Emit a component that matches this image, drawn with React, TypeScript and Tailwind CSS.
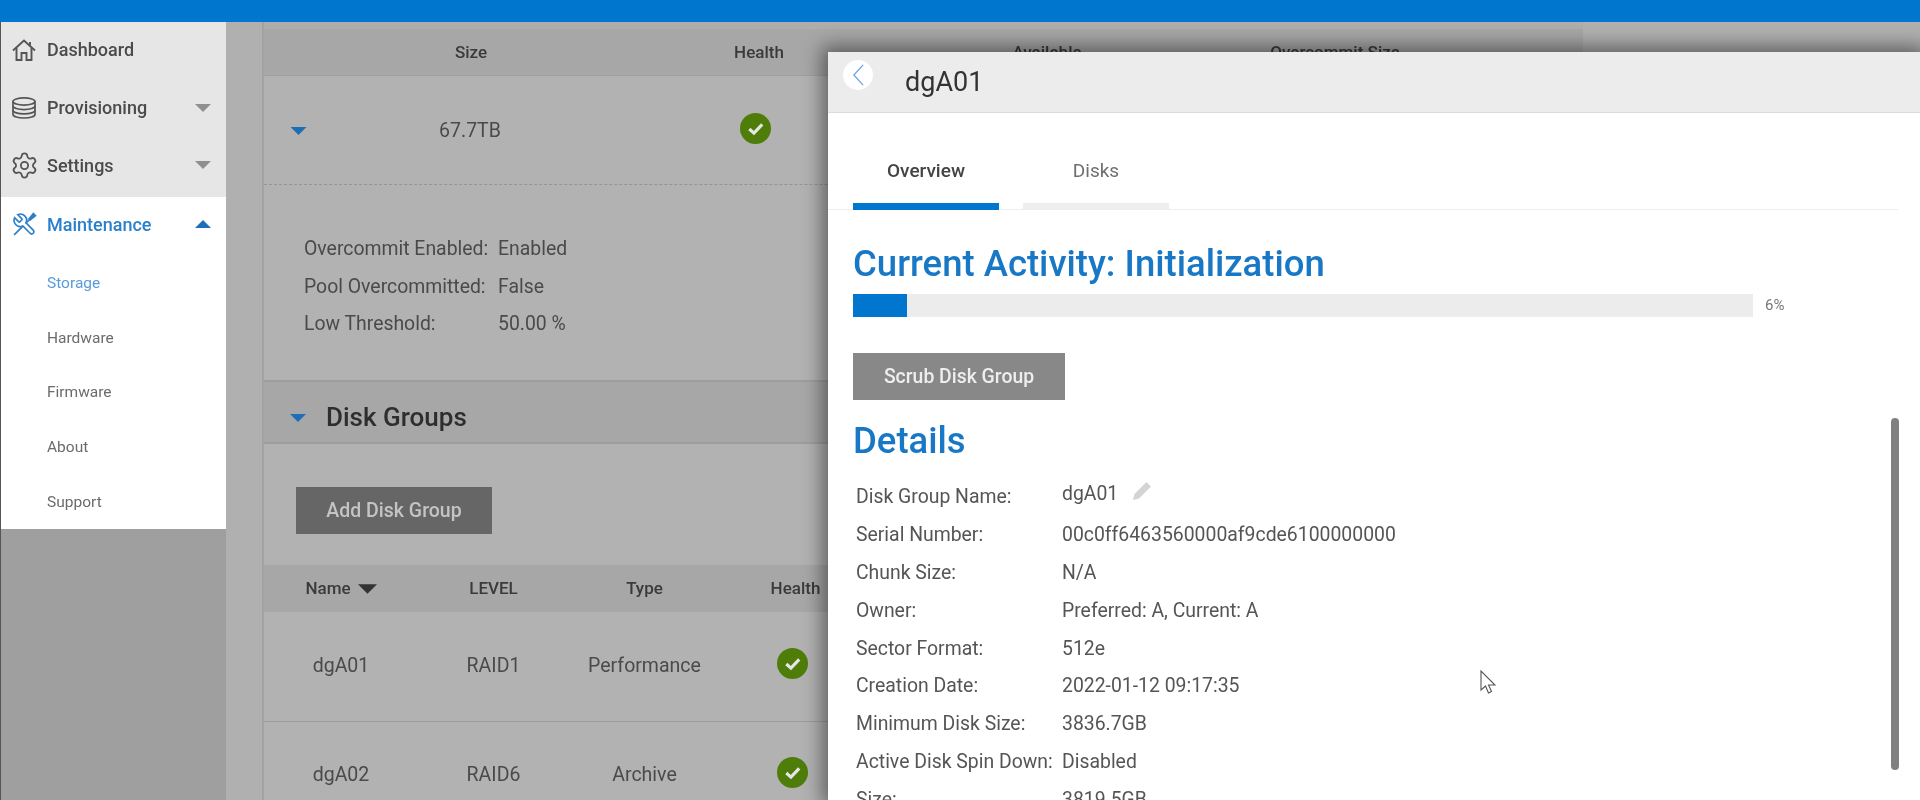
import { Settings } from "lucide-react";

const poolDetails = [
  ["Overcommit Enabled:", "Enabled"],
  ["Pool Overcommitted:", "False"],
  ["Low Threshold:", "50.00 %"],
];

const diskGroups = [
  { name: "dgA01", level: "RAID1", type: "Performance", height: "h-[110px]" },
  { name: "dgA02", level: "RAID6", type: "Archive", height: "h-[108px]" },
];

const details = [
  ["Serial Number:", "00c0ff6463560000af9cde6100000000"],
  ["Chunk Size:", "N/A"],
  ["Owner:", "Preferred: A, Current: A"],
  ["Sector Format:", "512e"],
  ["Creation Date:", "2022-01-12 09:17:35"],
  ["Minimum Disk Size:", "3836.7GB"],
  ["Active Disk Spin Down:", "Disabled"],
  ["Size:", "3819.5GB"],
];

function Caret({ up, className }: { up?: boolean; className: string }) {
  return (
    <svg viewBox="0 0 16 8" className={className} fill="currentColor">
      <path d={up ? "M8 0 16 8H0Z" : "M0 0H16L8 8Z"} />
    </svg>
  );
}

function HealthOk({ className = "" }: { className?: string }) {
  return (
    <svg viewBox="0 0 30 30" className={`h-[31px] w-[31px] ${className}`}>
      <circle cx="15" cy="15" r="15" fill="#4f7d0a" />
      <path d="M9 15.5 13.5 19.5 21.5 11" fill="none" stroke="#e6e6e6" strokeWidth="3" />
    </svg>
  );
}

function HomeIcon() {
  return (
    <svg viewBox="0 0 24 22" className="h-[22px] w-[24px]" fill="none" stroke="currentColor" strokeWidth="1.9">
      <path d="M1 11.5 12 1.5 23 11.5" />
      <path d="M4.5 9V21H9.5V14H14.5V21H19.5V9" />
      <path d="M18 3V7" />
    </svg>
  );
}

function DatabaseIcon() {
  return (
    <svg viewBox="0 0 24 22" className="h-[22px] w-[24px]" fill="none" stroke="currentColor" strokeWidth="1.7">
      <ellipse cx="12" cy="4.5" rx="11" ry="3.6" />
      <path d="M1 4.5V17.5C1 19.5 6 21 12 21S23 19.5 23 17.5V4.5" />
      <path d="M1 9C1 11 6 12.6 12 12.6S23 11 23 9" />
      <path d="M1 13.3C1 15.3 6 16.9 12 16.9S23 15.3 23 13.3" />
    </svg>
  );
}

function ToolsIcon() {
  return (
    <svg viewBox="0 0 24 24" className="h-[25px] w-[25px]" fill="none" stroke="currentColor" strokeWidth="1.6">
      <path
        transform="matrix(-1 0 0 1 24 0)"
        d="M14.7 6.3a1 1 0 0 0 0 1.4l1.6 1.6a1 1 0 0 0 1.4 0l3.77-3.77a6 6 0 0 1-7.94 7.94l-6.91 6.91a2.12 2.12 0 0 1-3-3l6.91-6.91a6 6 0 0 1 7.94-7.94l-3.76 3.76z"
      />
      <path d="M16.5 6.5 20.5 1.5 22.5 3.5 17.5 7.5Z" fill="currentColor" />
      <path d="M17 7 13 11M10.5 13.5 4 20 2 22" />
    </svg>
  );
}

function NavItem({ icon, label, caret }: { icon: React.ReactNode; label: string; caret?: boolean }) {
  return (
    <div className="flex h-[57.7px] items-center pl-[11px] pr-[15px] text-[18px] font-medium text-[#4b4b4b]">
      <span className="w-[35px] text-[#555555]">{icon}</span>
      <span className="flex-1">{label}</span>
      {caret && <Caret className="h-[8px] w-[16px] text-[#8f8f8f]" />}
    </div>
  );
}

function Sidebar() {
  return (
    <aside className="flex w-[225px] flex-col">
      <div className="h-[175px] bg-[#e6e6e6] pb-[2px]">
        <div className="-mt-px">
          <NavItem icon={<HomeIcon />} label="Dashboard" />
        </div>
        <NavItem icon={<DatabaseIcon />} label="Provisioning" caret />
        <NavItem icon={<Settings size={29} strokeWidth={1.5} className="-ml-[2px]" />} label="Settings" caret />
      </div>
      <div className="h-[332px] bg-white">
        <div className="flex h-[54px] items-center pl-[11px] pr-[15px] text-[18px] font-medium text-[#2b7fcb]">
          <span className="w-[35px]">
            <ToolsIcon />
          </span>
          <span className="flex-1">Maintenance</span>
          <Caret up className="h-[8px] w-[16px] text-[#1f6fb8]" />
        </div>
        <div className="flex flex-col pl-[46px] pt-[5px] text-[15.5px]">
          {["Storage", "Hardware", "Firmware", "About", "Support"].map((item) => (
            <div
              key={item}
              className={`flex h-[54.8px] items-center ${item === "Storage" ? "text-[#5a9bd8]" : "text-[#6b6b6b]"}`}
            >
              {item}
            </div>
          ))}
        </div>
      </div>
      <div className="flex-1 bg-[#9f9f9f]" />
    </aside>
  );
}

function MainPage() {
  return (
    <main className="w-[1321px] border-l-2 border-[#a2a2a2] bg-[#b2b2b2] text-[#4a4a4a]">
      <div className="h-[7px] bg-[#adadad]" />
      <div className="flex h-[47px] items-center border-b border-[#a0a0a0] bg-[#a7a7a7] pb-[1px] pl-[63px] pt-[2px] text-[17px] font-medium text-[#3a3a3a]">
        {["Size", "Health", "Available", "Overcommit Size"].map((col) => (
          <div key={col} className="w-[288px] text-center">
            {col}
          </div>
        ))}
      </div>
      <div className="flex h-[109px] items-center border-b border-dashed border-[#949494] pl-[26px] pt-[2px] text-[19.5px]">
        <Caret className="h-[8px] w-[17px] text-[#1d6fb5]" />
        <div className="ml-[19px] w-[288px] text-center">67.7TB</div>
        <div className="flex w-[288px] justify-center">
          <HealthOk className="-mt-[5px] mr-[6px]" />
        </div>
      </div>
      <div className="flex h-[195px] flex-col pl-[40px] pt-[45px] text-[19.4px]">
        {poolDetails.map(([label, value]) => (
          <div key={label} className="flex h-[37.6px] items-center">
            <span className="w-[194px]">{label}</span>
            <span>{value}</span>
          </div>
        ))}
      </div>
      <div className="flex h-[64px] items-center border-y-2 border-[#9e9e9e] bg-[#a7a7a7] pl-[26px] pt-[11px] text-[26px] font-medium text-[#2e2e2e]">
        <Caret className="mr-[20px] h-[8px] w-[16px] text-[#1d6fb5]" />
        Disk Groups
      </div>
      <div className="h-[121px] pl-[32px] pt-[43px]">
        <button className="h-[47px] w-[196px] bg-[#666666] text-[19.5px] font-medium text-[#c4c4c4]">
          Add Disk Group
        </button>
      </div>
      <div className="grid h-[47px] grid-cols-[154px_151px_151px_151px] items-center bg-[#a7a7a7] text-center text-[17px] font-medium text-[#3a3a3a]">
        <div className="flex items-center justify-center gap-[7px]">
          Name
          <Caret className="h-[12px] w-[19px] text-[#333333]" />
        </div>
        <div>LEVEL</div>
        <div>Type</div>
        <div>Health</div>
      </div>
      {diskGroups.map((group) => (
        <div
          key={group.name}
          className={`grid grid-cols-[154px_151px_151px_151px] items-center border-b border-[#9c9c9c] pb-[1px] text-center text-[19.5px] ${group.height}`}
        >
          <div>{group.name}</div>
          <div>{group.level}</div>
          <div>{group.type}</div>
          <div className="flex justify-center">
            <HealthOk className="-mt-[5px] mr-[6px]" />
          </div>
        </div>
      ))}
    </main>
  );
}

function DetailPanel() {
  return (
    <section className="absolute bottom-0 left-[828px] right-0 top-[52px] overflow-hidden bg-white shadow-[0_0_18px_6px_rgba(0,0,0,0.45)]">
      <header className="flex h-[61px] items-center border-b border-[#dcdcdc] bg-[#ececec]">
        <div className="ml-[15px] mt-[8px] flex h-[30px] w-[30px] items-center justify-center self-start rounded-full bg-white">
          <svg viewBox="0 0 14 26" className="h-[24px] w-[13px]" fill="none" stroke="#6aa6df" strokeWidth="1.4">
            <path d="M12 2 2 13 12 24" />
          </svg>
        </div>
        <h1 className="ml-[32px] text-[27px] text-[#333333]">dgA01</h1>
      </header>
      <div className="mr-[22px] mt-[38px] flex h-[59px] border-b border-[#eeeeee] pl-[25px] text-[19px]">
        <div className="flex h-[59px] w-[146px] items-start justify-center border-b-[7px] border-[#0076ce] pt-[6px] font-medium text-[#444444]">
          Overview
        </div>
        <div className="ml-[24px] flex h-[59px] w-[146px] items-start justify-center border-b-[7px] border-[#eeeeee] pt-[6px] text-[#6f6f6f]">
          Disks
        </div>
      </div>
      <div className="pl-[25px]">
        <h2 className="mt-[32px] text-[36.5px] font-medium leading-[44px] text-[#1878c6]">
          Current Activity: Initialization
        </h2>
        <div className="mt-[8px] flex items-center">
          <div className="h-[23px] w-[900px] bg-[#ececec]">
            <div className="h-full w-[6%] bg-[#0076ce]" />
          </div>
          <span className="ml-[12px] text-[15px] text-[#777777]">6%</span>
        </div>
        <button className="mt-[36px] h-[47px] w-[212px] bg-[#888888] text-[19.4px] font-medium text-[#eeeeee]">
          Scrub Disk Group
        </button>
        <h2 className="mt-[19px] text-[36.5px] font-medium leading-[44px] text-[#1878c6]">Details</h2>
        <div className="ml-[3px] mt-[14px] text-[19.4px] text-[#555555]">
          <div className="flex h-[38.8px] items-center">
            <span className="w-[206px]">Disk Group Name:</span>
            <span className="-mt-[6px]">dgA01</span>
            <svg viewBox="0 0 20 20" className="-mt-[11px] ml-[14px] h-[20px] w-[20px]" fill="#d4d4d4">
              <path d="M14.5 1 19 5.5 7 17.5 1 19 2.5 13Z" />
            </svg>
          </div>
          {details.map(([label, value]) => (
            <div key={label} className="flex h-[37.8px] items-center">
              <span className="w-[206px] shrink-0">{label}</span>
              <span>{value}</span>
            </div>
          ))}
        </div>
      </div>
      {/* scrollbar thumb and pointer sit over the panel content */}
      <div className="absolute left-[1063px] top-[366px] h-[352px] w-[8px] rounded-full bg-[#808080]" />
      <svg viewBox="0 0 16 24" className="absolute left-[652px] top-[618px] h-[24px] w-[16px]" fill="white" stroke="#555555" strokeWidth="1.1">
        <path d="M1 1V20L5.5 16 8.5 23 11.5 21.5 8.5 15H15Z" />
      </svg>
    </section>
  );
}

export default function App() {
  return (
    <div className="relative flex h-[800px] w-[1920px] flex-col overflow-hidden bg-[#b0b0b0] font-['Roboto',sans-serif] blur-[0.5px]">
      <div className="h-[22px] shrink-0 bg-[#0076ce]" />
      <div className="flex flex-1 overflow-hidden border-l border-[#555555]">
        <Sidebar />
        <div className="w-[36px] bg-[#b0b0b0]" />
        <MainPage />
        <div className="flex-1 bg-[#b0b0b0]" />
      </div>
      <DetailPanel />
    </div>
  );
}
